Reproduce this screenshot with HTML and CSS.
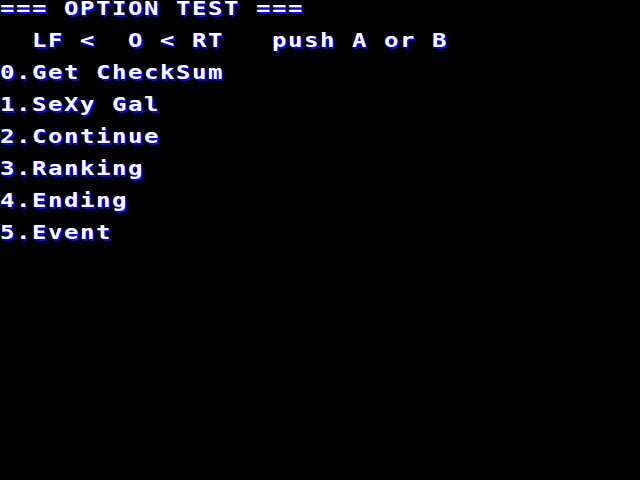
FILE: index.html
```html
<!DOCTYPE html>
<html>
<head>
<meta charset="utf-8">
<link rel="stylesheet" href="styles.css">
</head>
<body>
<div class="screen">
  <div class="line">=== OPTION TEST ===</div>
  <div class="line">  LF &lt;  O &lt; RT   push A or B</div>
  <div class="line">0.Get CheckSum</div>
  <div class="line">1.SeXy Gal</div>
  <div class="line">2.Continue</div>
  <div class="line">3.Ranking</div>
  <div class="line">4.Ending</div>
  <div class="line">5.Event</div>
</div>
</body>
</html>
```
FILE: styles.css
```css
html, body {
  margin: 0;
  padding: 0;
  background: #000;
  width: 640px;
  height: 480px;
  overflow: hidden;
}
.screen {
  display: flex;
  flex-direction: column;
  gap: 14px;
  padding-top: 1px;
  font-family: "DejaVu Sans Mono", monospace;
  font-weight: bold;
  font-size: 24px;
  line-height: 18px;
  letter-spacing: 1.55px;
  color: #fff;
  text-shadow: 2px 2.5px 0 #0000ff;
}
.line {
  height: 18px;
  white-space: pre;
  transform: scaleY(0.8);
  transform-origin: left top;
}
```
